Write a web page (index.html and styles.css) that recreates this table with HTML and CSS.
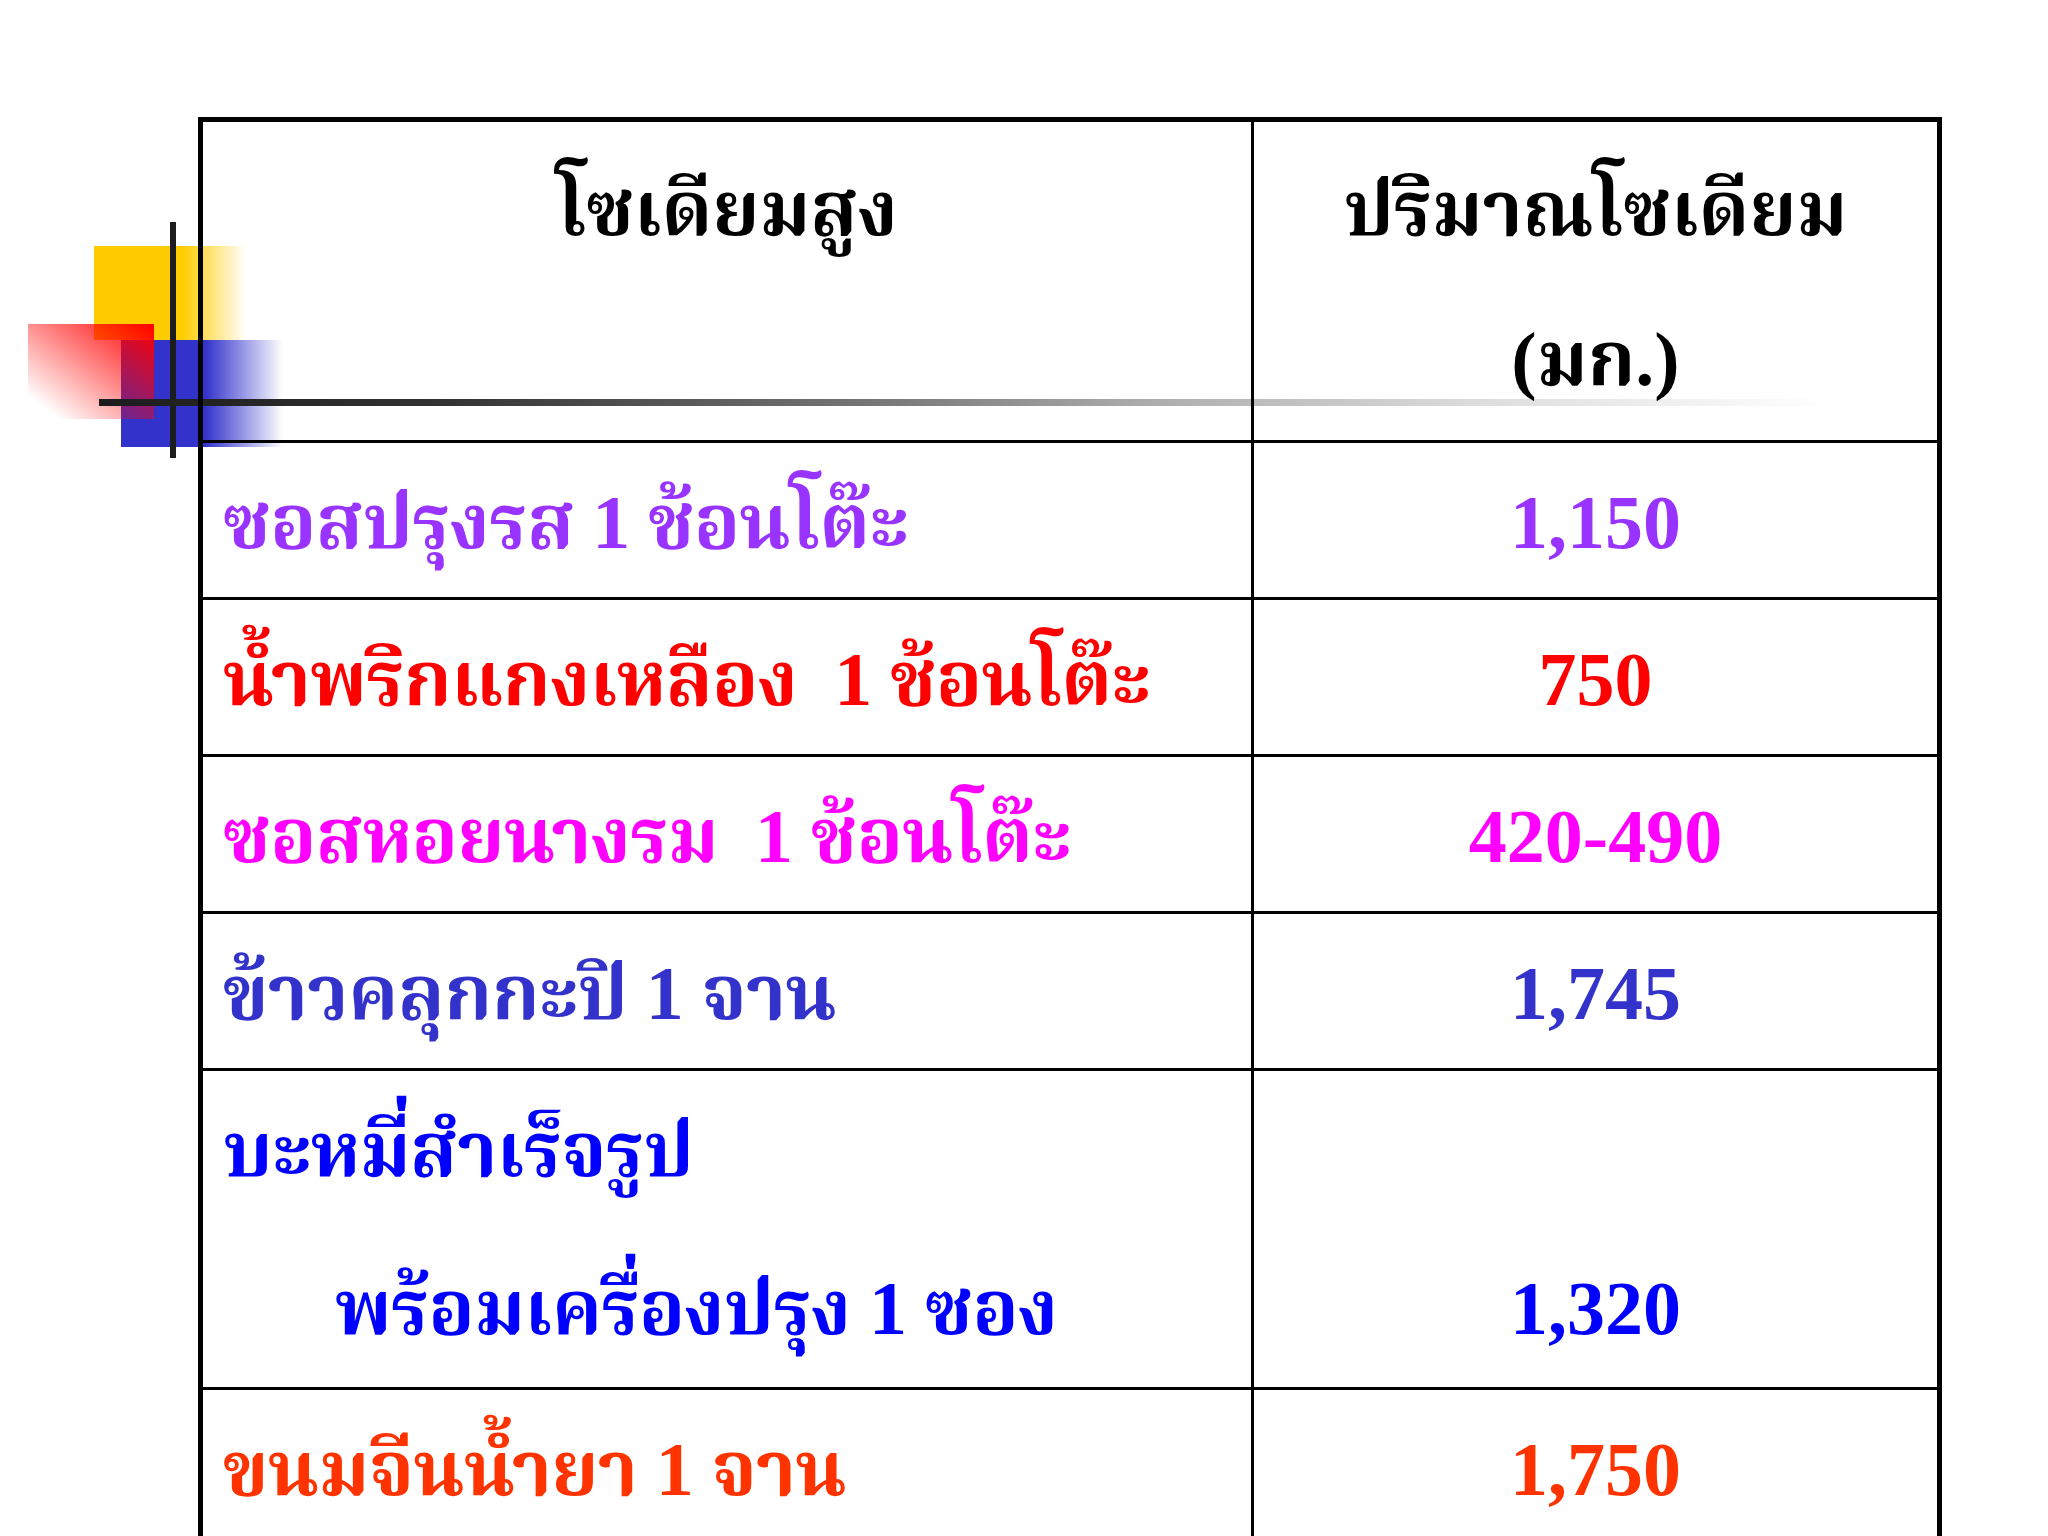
FILE: index.html
```html
<!DOCTYPE html>
<html lang="th">
<head>
<meta charset="utf-8">
<title>โซเดียมสูง</title>
<link rel="stylesheet" href="styles.css">
</head>
<body>
<div class="slide">
  <div class="deco" aria-hidden="true">
    <div class="sq sq-yellow"></div>
    <div class="sq sq-blue"></div>
    <div class="sq sq-red"></div>
    <div class="vline"></div>
    <div class="hline"></div>
  </div>
  <table class="sodium">
    <colgroup><col class="c1"><col class="c2"></colgroup>
    <thead>
      <tr>
        <th class="name-h">โซเดียมสูง</th>
        <th class="amt-h">ปริมาณโซเดียม<br>(มก.)</th>
      </tr>
    </thead>
    <tbody>
      <tr class="row-purple"><td class="name">ซอสปรุงรส 1 ช้อนโต๊ะ</td><td class="amt">1,150</td></tr>
      <tr class="row-red"><td class="name">น้ำพริกแกงเหลือง&nbsp; 1 ช้อนโต๊ะ</td><td class="amt">750</td></tr>
      <tr class="row-magenta"><td class="name">ซอสหอยนางรม&nbsp; 1 ช้อนโต๊ะ</td><td class="amt">420-490</td></tr>
      <tr class="row-indigo"><td class="name">ข้าวคลุกกะปิ 1 จาน</td><td class="amt">1,745</td></tr>
      <tr class="row-blue two"><td class="name">บะหมี่สำเร็จรูป<br><span class="indent">พร้อมเครื่องปรุง 1 ซอง</span></td><td class="amt"><br>1,320</td></tr>
      <tr class="row-orange"><td class="name">ขนมจีนน้ำยา 1 จาน</td><td class="amt">1,750</td></tr>
    </tbody>
  </table>
</div>
</body>
</html>
```
FILE: styles.css
```css
html, body {
  margin: 0;
  padding: 0;
  background: #ffffff;
}
.slide {
  position: relative;
  width: 2048px;
  height: 1536px;
  overflow: hidden;
  background: #ffffff;
  padding: 117px 0 0 198px;
  box-sizing: border-box;
  font-family: "Liberation Serif", "Noto Serif Thai", "Noto Sans Thai", "Norasi", "Kinnari", "Loma", "Garuda", "Tlwg Typo", serif;
  font-weight: bold;
}
.deco {
  position: absolute;
  left: 0;
  top: 0;
  width: 0;
  height: 0;
}
.sq, .vline, .hline {
  position: absolute;
}
.sq-yellow {
  left: 94px;
  top: 246px;
  width: 152px;
  height: 94px;
  background: linear-gradient(to right, #ffcc00 0%, #ffcc00 58%, rgba(255, 204, 0, 0) 100%);
}
.sq-blue {
  left: 121px;
  top: 340px;
  width: 162px;
  height: 107px;
  background: linear-gradient(to right, #3333cc 0%, #3333cc 52%, rgba(51, 51, 204, 0) 100%);
}
.sq-red {
  left: 28px;
  top: 324px;
  width: 126px;
  height: 95px;
  background: linear-gradient(to top right, rgba(255, 0, 0, 0) 12%, #ff0000 100%);
}
.vline {
  left: 170px;
  top: 222px;
  width: 6px;
  height: 236px;
  background: #1c1c1c;
}
.hline {
  left: 99px;
  top: 399px;
  width: 1730px;
  height: 7px;
  background: linear-gradient(to right, #1c1c1c 0%, #333333 20%, #777777 45%, #aaaaaa 60%, #dddddd 80%, rgba(240, 240, 240, 0) 100%);
}
.sodium {
  position: relative;
  z-index: 1;
  width: 1744px;
  table-layout: fixed;
  border-collapse: collapse;
  border: 5px solid #000;
}
.c1 { width: 1052px; }
.sodium th,
.sodium td {
  border: 3px solid #000;
  padding: 4px 20px 0;
  vertical-align: top;
  line-height: 150px;
  font-size: 76px;
  white-space: nowrap;
}
.sodium th {
  color: #000;
  text-align: center;
  padding-top: 12px;
  padding-bottom: 6px;
}
.sodium td.name {
  letter-spacing: -0.5px;
}
.sodium td.amt {
  text-align: center;
}
.two td {
  line-height: 158px;
  padding-top: 0;
}
.indent {
  padding-left: 112px;
}
.row-purple td { color: #9933ff; }
.row-red td { color: #ff0000; }
.row-magenta td { color: #ff00ff; }
.row-indigo td { color: #3333cc; }
.row-blue td { color: #0000ff; }
.row-orange td { color: #ff3300; }
```
